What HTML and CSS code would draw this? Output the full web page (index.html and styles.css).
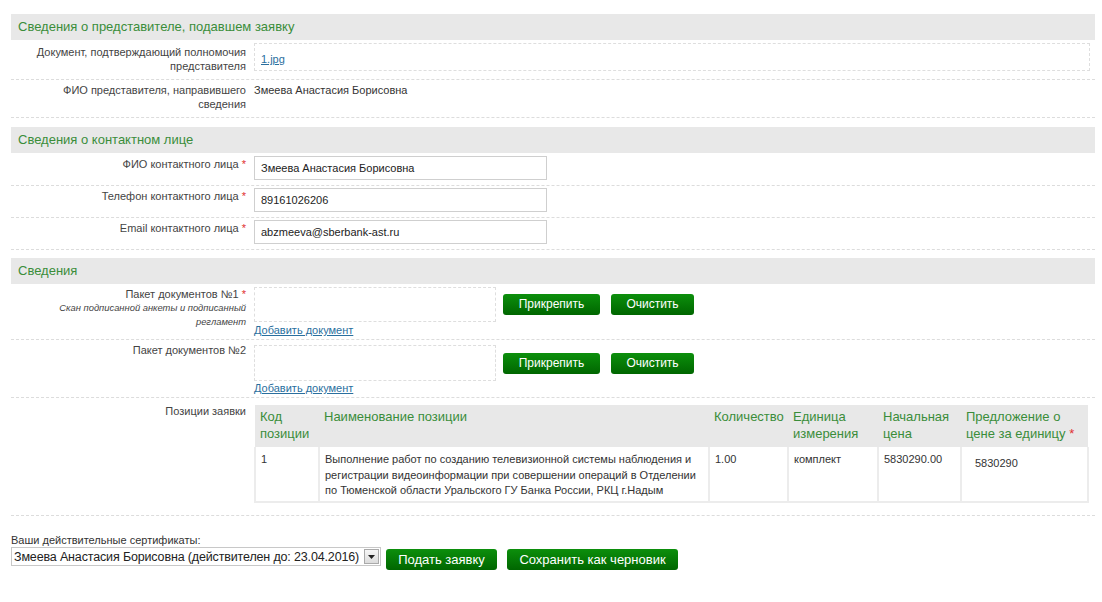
FILE: index.html
```html
<!DOCTYPE html>
<html lang="ru">
<head>
<meta charset="utf-8">
<title>Заявка</title>
<link rel="stylesheet" href="styles.css">
</head>
<body>
<div class="page">
  <div class="section-head">Сведения о представителе, подавшем заявку</div>
  <div class="row row-doc">
    <div class="label">Документ, подтверждающий полномочия представителя</div>
    <div class="value"><div class="filebox wide"><a href="#" class="link">1.jpg</a></div></div>
  </div>
  <div class="row row-fio">
    <div class="label">ФИО представителя, направившего сведения</div>
    <div class="value plain">Змеева Анастасия Борисовна</div>
  </div>

  <div class="section-head head-contact">Сведения о контактном лице</div>
  <div class="row row-input first">
    <div class="label">ФИО контактного лица <span class="req">*</span></div>
    <div class="value"><div class="input">Змеева Анастасия Борисовна</div></div>
  </div>
  <div class="row row-input">
    <div class="label">Телефон контактного лица <span class="req">*</span></div>
    <div class="value"><div class="input">89161026206</div></div>
  </div>
  <div class="row row-input">
    <div class="label">Email контактного лица <span class="req">*</span></div>
    <div class="value"><div class="input">abzmeeva@sberbank-ast.ru</div></div>
  </div>

  <div class="section-head head-info">Сведения</div>
  <div class="row row-pkg">
    <div class="label">Пакет документов №1 <span class="req">*</span>
      <div class="hint">Скан подписанной анкеты и подписанный регламент</div>
    </div>
    <div class="value">
      <div class="pkg">
        <div class="filebox"></div>
        <div class="btns">
          <span class="btn">Прикрепить</span>
          <span class="btn">Очистить</span>
        </div>
      </div>
      <a href="#" class="link add">Добавить документ</a>
    </div>
  </div>
  <div class="row row-pkg row-pkg2">
    <div class="label">Пакет документов №2</div>
    <div class="value">
      <div class="pkg">
        <div class="filebox tall"></div>
        <div class="btns">
          <span class="btn">Прикрепить</span>
          <span class="btn">Очистить</span>
        </div>
      </div>
      <a href="#" class="link add">Добавить документ</a>
    </div>
  </div>
  <div class="row row-table">
    <div class="label">Позиции заявки</div>
    <div class="value">
      <table class="positions">
        <thead>
          <tr>
            <th class="c-code">Код позиции</th>
            <th class="c-name">Наименование позиции</th>
            <th class="c-qty">Количество</th>
            <th class="c-unit">Единица измерения</th>
            <th class="c-price">Начальная цена</th>
            <th class="c-offer">Предложение о цене за единицу <span class="req">*</span></th>
          </tr>
        </thead>
        <tbody>
          <tr>
            <td>1</td>
            <td>Выполнение работ по созданию телевизионной системы наблюдения и регистрации видеоинформации при совершении операций в Отделении по Тюменской области Уральского ГУ Банка России, РКЦ г.Надым</td>
            <td>1.00</td>
            <td>комплект</td>
            <td>5830290.00</td>
            <td class="offer">5830290</td>
          </tr>
        </tbody>
      </table>
    </div>
  </div>

  <div class="footer">
    <div class="cert-label">Ваши действительные сертификаты:</div>
    <div class="footer-line">
      <div class="select">
        <span class="select-text">Змеева Анастасия Борисовна (действителен до: 23.04.2016)</span>
        <span class="select-arrow"><svg width="7" height="4" viewBox="0 0 7 4"><path d="M0 0h7L3.5 4z" fill="#222"/></svg></span>
      </div>
      <span class="btn big">Подать заявку</span>
      <span class="btn big">Сохранить как черновик</span>
    </div>
  </div>
</div>
</body>
</html>
```

FILE: styles.css
```css
* { box-sizing: border-box; }
html, body { margin: 0; padding: 0; background: #fff; }
body {
  font-family: "Liberation Sans", Arial, sans-serif;
  font-size: 11px;
  color: #333;
}
.page {
  width: 1084px;
  margin-left: 11px;
  padding-top: 14px;
}
.section-head {
  height: 26px;
  line-height: 26px;
  background: #e8e8e8;
  color: #3a8d3a;
  font-size: 13px;
  padding-left: 7px;
}
.head-contact { margin-top: 9px; }
.head-info { margin-top: 8px; }
.row {
  display: grid;
  grid-template-columns: 243px 1fr;
  border-bottom: 1px dashed #dcdcdc;
}
.label {
  text-align: right;
  padding-right: 8px;
  padding-left: 22px;
  line-height: 14px;
  color: #444;
}
.req { color: #e03030; }
.value { padding-right: 5px; }
.link { color: #2a6f9e; text-decoration: underline; }

.filebox {
  border: 1px dashed #dedede;
}
.filebox.wide {
  height: 28px;
  padding: 9px 0 0 6px;
  line-height: 12px;
}
.row-doc { height: 40px; }
.row-doc .label { padding-top: 5px; }
.row-doc .value { padding-top: 3px; }
.row-fio { height: 38px; }
.row-fio .label { padding-top: 3px; }
.row-fio .value { padding-top: 3px; line-height: 14px; color: #333; }

.row-input { height: 32px; }
.row-input.first { height: 33px; }
.row-input .label { padding-top: 3px; }
.row-input .value { padding-top: 2px; }
.row-input.first .value { padding-top: 3px; }
.row-input.first .label { padding-top: 4px; }
.input {
  width: 293px;
  height: 24px;
  border: 1px solid #cfcfcf;
  padding-left: 6px;
  line-height: 22px;
  color: #222;
}

.row-pkg { height: 56px; }
.row-pkg .label { padding-top: 3px; padding-left: 0; }
.row-pkg .value { padding-top: 3px; }
.hint {
  font-size: 9.4px;
  font-style: italic;
  line-height: 14px;
  padding-left: 35px;
  color: #444;
}
.pkg { display: flex; align-items: center; }
.pkg .filebox { width: 242px; height: 35px; }
.pkg .filebox.tall { height: 36px; }
.btns { display: flex; gap: 11px; margin-left: 7px; }
.btn {
  display: inline-block;
  height: 21px;
  line-height: 21px;
  padding: 0 13px;
  border-radius: 3px;
  background: linear-gradient(#0c8f0c, #006600);
  color: #fff;
  font-size: 12px;
  text-align: center;
}
.btns .btn:first-child { width: 97px; padding: 0; }
.btns .btn:last-child { width: 83px; padding: 0; }
.add { display: block; line-height: 14px; margin-top: 1px; }
.row-pkg2 { height: 58px; }
.row-pkg2 .value { padding-top: 5px; }
.row-pkg2 .add { margin-top: 0px; }

.row-table { height: 118px; }
.row-table .label { padding-top: 6px; }
.row-table .value { padding-top: 7px; padding-right: 6px; }
.positions {
  width: 100%;
  border-collapse: collapse;
  table-layout: fixed;
}
.positions th {
  background: #e8e8e8;
  color: #3a8d3a;
  font-weight: normal;
  font-size: 13px;
  line-height: 17px;
  text-align: left;
  vertical-align: top;
  padding: 3px 5px 4px;
  height: 42px;
}
.positions td {
  border: 2px solid #ececec;
  border-top: 0;
  vertical-align: top;
  padding: 5px 5px 2px;
  line-height: 15.5px;
  height: 53px;
  color: #333;
}
.c-code { width: 64px; }
.c-name { width: 390px; }
.c-qty { width: 79px; }
.c-unit { width: 90px; }
.c-price { width: 83px; }
.positions td.offer { padding-left: 13px; padding-top: 9px; }

.footer { padding-top: 17px; }
.cert-label { line-height: 14px; color: #333; }
.footer-line { display: flex; align-items: flex-start; }
.select {
  width: 370px;
  height: 19px;
  border: 1px solid #c8c8c8;
  display: flex;
  align-items: center;
  font-size: 12.5px;
  letter-spacing: -0.15px;
  color: #222;
  padding-left: 2px;
  white-space: nowrap;
  overflow: hidden;
}
.select-text { flex: 1; }
.select-arrow {
  width: 15px;
  height: 15px;
  margin-right: 1px;
  border: 1px solid #aaa;
  background: linear-gradient(#f6f6f6, #dcdcdc);
  display: flex;
  align-items: center;
  justify-content: center;
  flex: none;
}
.btn.big {
  font-size: 13px;
  margin-top: 2px;
  height: 21px;
  line-height: 21px;
}
.footer-line .btn.big:nth-of-type(1) { margin-left: 5px; width: 111px; padding: 0; }
.footer-line .btn.big:nth-of-type(2) { margin-left: 10px; width: 171px; padding: 0; }
```
